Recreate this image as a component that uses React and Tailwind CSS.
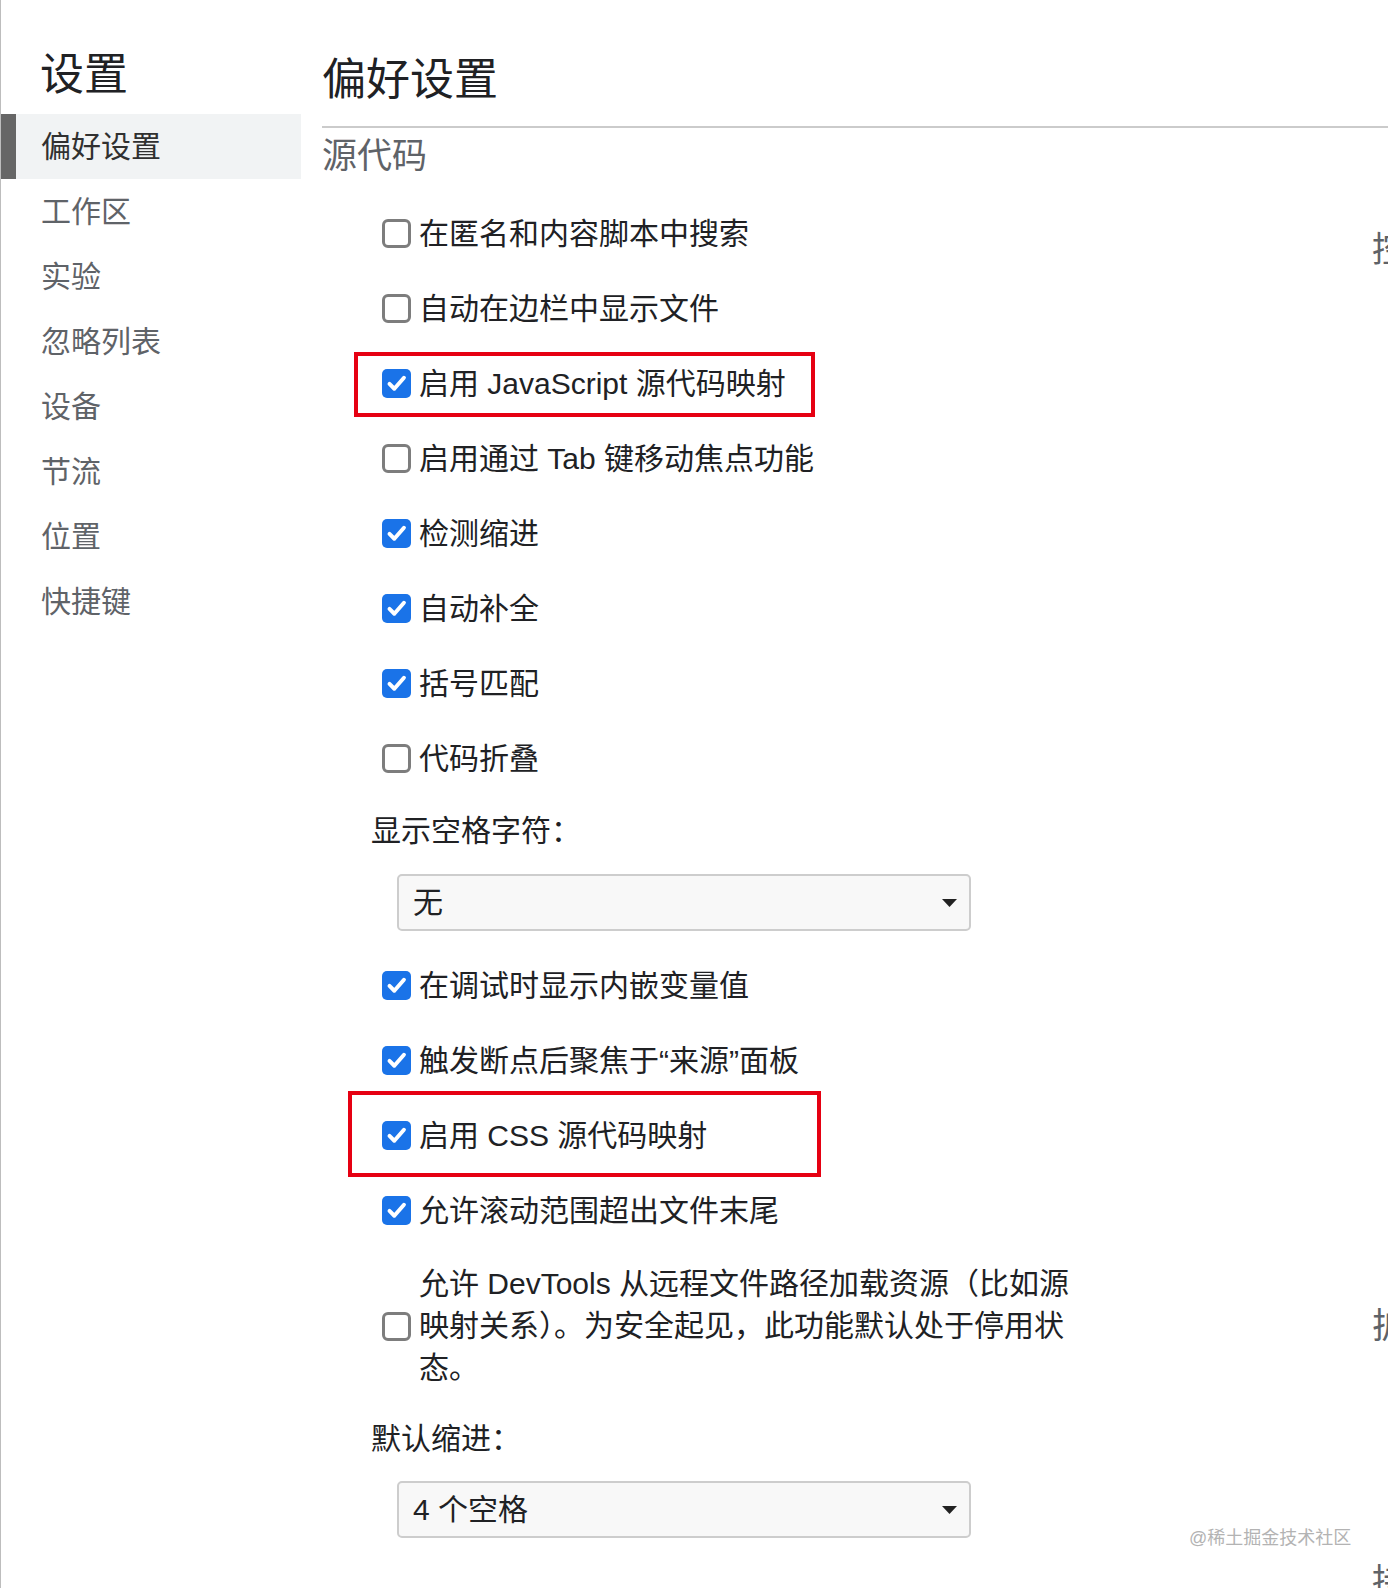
import React from "react";

const navItems = ["偏好设置", "工作区", "实验", "忽略列表", "设备", "节流", "位置", "快捷键"];

function Box({ on }) {
  if (on) {
    return (
      <span className="flex h-[29px] w-[29px] shrink-0 items-center justify-center rounded-[5px] bg-[#1a73e8]">
        <svg width="21" height="21" viewBox="0 0 24 24">
          <path
            d="M4 12.5l5.5 5.5L20.5 5.5"
            fill="none"
            stroke="white"
            strokeWidth="4.5"
            strokeLinecap="round"
            strokeLinejoin="round"
          />
        </svg>
      </span>
    );
  }
  return <span className="h-[29px] w-[29px] shrink-0 rounded-[6px] border-[3px] border-[#7d7d7d] bg-white" />;
}

function Row({ on, label, children }) {
  return (
    <div className="relative ml-[60px] flex h-[75px] items-center gap-[8px] text-[30px] text-[#202124]">
      <Box on={on} />
      <span className="whitespace-nowrap leading-[40px]">{label}</span>
      {children}
    </div>
  );
}

function Select({ value }) {
  return (
    <div className="ml-[75px] flex h-[57px] w-[574px] items-center justify-between rounded-[5px] border-2 border-[#cdcdcd] bg-[#f8f8f8] pl-[14px] pr-[12px] text-[30px] text-[#202124]">
      <span className="leading-[40px]">{value}</span>
      <svg width="15" height="8" viewBox="0 0 15 8">
        <path d="M0 0h15L7.5 8z" fill="#222" />
      </svg>
    </div>
  );
}

function Label({ text }) {
  return (
    <div className="ml-[49px] flex h-[70px] items-center text-[30px] text-[#202124]">
      <span className="leading-[40px]">{text}</span>
    </div>
  );
}

export default function App() {
  return (
    <div className="relative flex h-[1588px] w-[1388px] overflow-hidden border-l border-[#bdbdbd] bg-white font-['Liberation_Sans','Noto_Sans_CJK_SC',sans-serif]">
      {/* sidebar */}
      <aside className="w-[300px] shrink-0 pt-[48px]">
        <h1 className="mb-[12px] pl-[39px] text-[44px] leading-[54px] text-[#202124]">设置</h1>
        {navItems.map((item, i) => (
          <div
            key={item}
            className={
              i === 0
                ? "flex h-[65px] items-center border-l-[15px] border-[#666666] bg-[#f1f3f4] pl-[25px] text-[30px] text-[#303030]"
                : "flex h-[65px] items-center pl-[40px] text-[30px] text-[#5f6368]"
            }
          >
            <span className="leading-[40px]">{item}</span>
          </div>
        ))}
      </aside>

      {/* main */}
      <main className="min-w-0 flex-1 pl-[21px] pt-[52px]">
        <h2 className="whitespace-nowrap text-[44px] leading-[56px] text-[#202124]">偏好设置</h2>
        <div className="mt-[18px] h-[2px] w-[1200px] bg-[#cbcbcb]" />

        <div className="flex">
          <section className="w-[1050px] shrink-0">
            <h3 className="mt-[8px] text-[35px] leading-[40px] text-[#5f6368]">源代码</h3>
            <div className="mt-[20px]">
              <Row on={false} label="在匿名和内容脚本中搜索" />
              <Row on={false} label="自动在边栏中显示文件" />
              <Row on label="启用 JavaScript 源代码映射">
                <div className="absolute left-[-28px] top-[6px] h-[65px] w-[461px] border-4 border-[#e60012]" />
              </Row>
              <Row on={false} label="启用通过 Tab 键移动焦点功能" />
              <Row on label="检测缩进" />
              <Row on label="自动补全" />
              <Row on label="括号匹配" />
              <Row on={false} label="代码折叠" />
            </div>

            <Label text="显示空格字符：" />
            <div className="mt-[8px]">
              <Select value="无" />
            </div>

            <div className="mt-[17px]">
              <Row on label="在调试时显示内嵌变量值" />
              <Row on label="触发断点后聚焦于“来源”面板" />
              <Row on label="启用 CSS 源代码映射">
                <div className="absolute left-[-34px] top-[-7px] h-[86px] w-[473px] border-4 border-[#e60012]" />
              </Row>
              <Row on label="允许滚动范围超出文件末尾" />
            </div>

            <div className="ml-[60px] mt-[15px] flex items-center gap-[8px] text-[30px] text-[#202124]">
              <Box on={false} />
              <p className="whitespace-nowrap leading-[42px]">
                允许 DevTools 从远程文件路径加载资源（比如源
                <br />
                映射关系）。为安全起见，此功能默认处于停用状
                <br />
                态。
              </p>
            </div>

            <div className="mt-[15px]">
              <Label text="默认缩进：" />
            </div>
            <div className="mt-[7px]">
              <Select value="4 个空格" />
            </div>
          </section>

          <section className="shrink-0 whitespace-nowrap text-[35px] leading-[40px] text-[#5f6368]">
            <h3 className="mt-[102px]">控制台</h3>
            <h3 className="mt-[1036px]">扩展程序</h3>
            <h3 className="mt-[216px]">持久性</h3>
          </section>
        </div>
      </main>

      <div className="absolute left-[1188px] top-[1526px] text-[18px] leading-[24px] text-[#b3b3b3]">
        @稀土掘金技术社区
      </div>
    </div>
  );
}
